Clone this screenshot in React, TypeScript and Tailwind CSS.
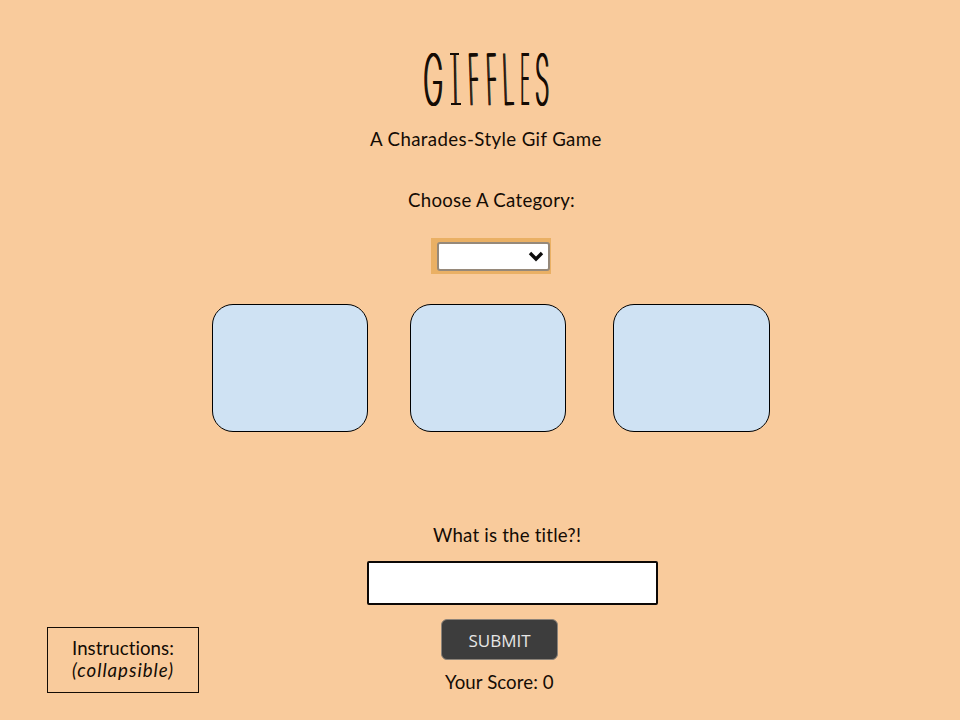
const serif = "relative before:absolute before:top-[10px] before:left-[4px] before:h-[2px] before:w-[9px] before:bg-[#140b04] after:absolute after:top-[60px] after:left-[5px] after:h-[2px] after:w-[10px] after:bg-[#140b04]";

const letters = [
  { ch: 'G', cell: 'w-[26px]', look: 'scale-x-[0.38] rotate-0' },
  { ch: 'I', cell: `w-[18px] ${serif}`, look: 'scale-x-[0.3] -rotate-1' },
  { ch: 'F', cell: 'w-[19px]', look: 'scale-x-[0.27] -rotate-2' },
  { ch: 'F', cell: 'w-[17px]', look: 'scale-x-[0.27] -rotate-2' },
  { ch: 'L', cell: 'w-[16px]', look: 'scale-x-[0.28] -rotate-2' },
  { ch: 'E', cell: 'w-[17px]', look: 'scale-x-[0.23] rotate-0' },
  { ch: 'S', cell: 'w-[19px]', look: 'scale-x-[0.33] rotate-0' },
];

const label = "whitespace-nowrap text-[18.67px] leading-[23px] text-[#140b04] [font-variant-ligatures:none]";

function Title() {
  return (
    <h1 className="ml-[420px] flex h-[72px] w-[130px] text-[71px] leading-[72px] font-extralight text-[#140b04] font-['Inter'] [text-shadow:2px_0_0_#140b04,-2px_0_0_#140b04]">
      {letters.map((l, i) => (
        <span key={i} className={`flex shrink-0 justify-center ${l.cell}`}>
          <span className={`block ${l.look}`}>{l.ch}</span>
        </span>
      ))}
    </h1>
  );
}

function CategorySelect() {
  return (
    <div className="h-[36px] w-[120px] bg-[#eab064] pt-[4px] pl-[6px]">
      <button aria-label="Category" className="flex h-[29px] w-[113px] items-center justify-end rounded-[3px] border-2 border-[#96897a] bg-white pr-[4px]">
        <svg width="16" height="12" viewBox="0 0 16 12" fill="none" stroke="#0c0c0c" strokeWidth="3.4">
          <path d="M2 2 L8 8 L14 2" />
        </svg>
      </button>
    </div>
  );
}

export default function App() {
  return (
    <main className="flex h-[720px] w-[960px] flex-col overflow-hidden bg-[#f9cb9c] pt-[43px] font-['Lato','Noto_Sans',sans-serif]">
      <Title />
      <p className={`mt-[13px] ml-[370px] tracking-[0.38px] ${label}`}>A Charades-Style Gif Game</p>
      <p className={`mt-[38px] ml-[408px] tracking-[0.27px] ${label}`}>Choose A Category:</p>
      <div className="mt-[26px] ml-[431px]">
        <CategorySelect />
      </div>
      <section className="mt-[30px] ml-[212px] flex h-[128px]">
        <div className="w-[156px] rounded-[21px] border border-black bg-[#cfe2f3]" />
        <div className="ml-[42px] w-[156px] rounded-[21px] border border-black bg-[#cfe2f3]" />
        <div className="ml-[47px] w-[157px] rounded-[21px] border border-black bg-[#cfe2f3]" />
      </section>
      <section className="mt-[92px] flex">
        <aside className="mt-[103px] ml-[47px] h-[66px] w-[152px] border border-[#140b04] pt-[9px] pl-[24px]">
          <p className={`tracking-[0.05px] ${label}`}>Instructions:</p>
          <p className={`-mt-px italic tracking-[0.98px] ${label}`}>(collapsible)</p>
        </aside>
        <form className="ml-[168px] w-[300px]">
          <p className={`ml-[66px] tracking-[0.2px] ${label}`}>What is the title?!</p>
          <input aria-label="Title" className="mt-[13.5px] block h-[44px] w-[290.5px] rounded-[2px] border-2 border-[#0c0806] bg-white" />
          <button type="button" className="mt-[14.5px] ml-[74px] flex h-[41px] w-[117px] items-center justify-center rounded-[6px] border border-[#8c8379] bg-[#3d3d3d] pt-[2px] font-['Open_Sans'] text-[17px] text-[#e6e6e6]">
            SUBMIT
          </button>
          <p className={`mt-[11px] ml-[78px] tracking-[0.08px] ${label}`}>Your Score: 0</p>
        </form>
      </section>
    </main>
  );
}
